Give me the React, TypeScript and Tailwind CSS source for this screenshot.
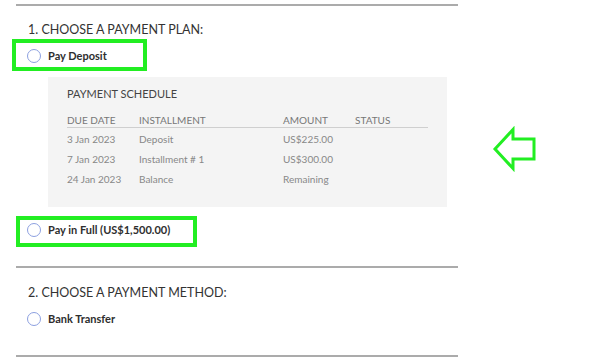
import React from 'react';

const rows = [
  { date: '3 Jan 2023', name: 'Deposit', amount: 'US$225.00' },
  { date: '7 Jan 2023', name: 'Installment # 1', amount: 'US$300.00' },
  { date: '24 Jan 2023', name: 'Balance', amount: 'Remaining' },
];

function Radio({ label }: { label: string }) {
  return (
    <div className="flex items-center h-5 pl-[11px] gap-[7px]">
      <span className="w-[14px] h-[14px] rounded-full border border-[#8c9fe0] bg-white" />
      <span className="text-[11px] font-bold text-[#2e2e2e]">{label}</span>
    </div>
  );
}

export default function App() {
  return (
    <div className="w-[600px] h-[359px] bg-white flex overflow-hidden font-['Lato','Open_Sans',sans-serif]">
      <div className="relative ml-4 w-[442px]">
        <div className="mt-1 h-[2px] bg-[#ababab]" />
        <h2 className="mt-4 pl-3 text-[12.5px] leading-4 text-[#333]">1. CHOOSE A PAYMENT PLAN:</h2>
        <div className="mt-2">
          <Radio label="Pay Deposit" />
        </div>

        <div className="mt-[11px] ml-8 w-[399px] h-[130px] bg-[#f4f4f4] pt-[9px] pl-[19px] pr-[19px]">
          <div className="text-[11px] leading-4 text-[#444]">PAYMENT SCHEDULE</div>
          <div className="mt-[11px] text-[10px] text-[#888]">
            <div className="grid grid-cols-[72px_144px_72px_1fr] h-[15px] items-center border-b border-[#cfcfcf] text-[#777]">
              <span>DUE DATE</span>
              <span>INSTALLMENT</span>
              <span>AMOUNT</span>
              <span>STATUS</span>
            </div>
            <div className="mt-px">
              {rows.map((r) => (
                <div key={r.date} className="grid grid-cols-[72px_144px_72px_1fr] h-5 items-center">
                  <span>{r.date}</span>
                  <span>{r.name}</span>
                  <span>{r.amount}</span>
                  <span />
                </div>
              ))}
            </div>
          </div>
        </div>

        <div className="mt-[13px]">
          <Radio label="Pay in Full (US$1,500.00)" />
        </div>

        <div className="mt-[26px] h-[2px] bg-[#ababab]" />
        <h2 className="mt-[17px] pl-3 text-[12.5px] leading-4 text-[#333]">2. CHOOSE A PAYMENT METHOD:</h2>
        <div className="mt-2">
          <Radio label="Bank Transfer" />
        </div>
        <div className="mt-[26px] h-[2px] bg-[#ababab]" />

        {/* annotation boxes */}
        <div className="absolute left-[-4px] top-[39px] w-[135px] h-[32px] border-4 border-[#22ee22]" />
        <div className="absolute left-0 top-[216px] w-[181px] h-[31px] border-4 border-[#22ee22]" />
      </div>

      <div className="ml-[34px] mt-[126px]">
        <svg width="46" height="48" viewBox="0 0 46 48">
          <path d="M3 23 L21 3.5 L21 13 L42 13 L42 33 L21 33 L21 42.5 Z" fill="none" stroke="#22ee22" strokeWidth="3" />
        </svg>
      </div>
    </div>
  );
}
